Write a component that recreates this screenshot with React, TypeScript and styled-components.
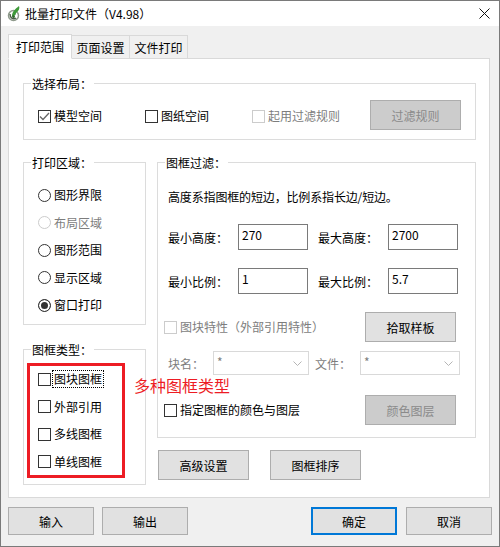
import React from "react";
import styled, { createGlobalStyle } from "styled-components";

const GlobalStyle = createGlobalStyle`
  html, body {
    margin: 0;
    padding: 0;
    background: #fff;
  }
  body {
    font-family: "Noto Sans CJK SC", "Liberation Sans", sans-serif;
    font-size: 12px;
    color: #000;
  }
  * {
    box-sizing: border-box;
  }
`;

const Logo = () => (
  <svg width="14" height="17" viewBox="0 0 14 17">
    <circle cx="6.5" cy="10.5" r="5" fill="#fff" stroke="#8f9a8c" strokeWidth="1.5" />
    <path d="M5 11C5 7 8 4 12 1c1 2 0 5-3 7 0 2-1 3-4 3z" fill="#3f9a3a" />
    <path d="M3 9c0 4 3 6 6 4" fill="none" stroke="#4a5c46" strokeWidth="1.4" />
    <circle cx="6.5" cy="11.5" r="1.5" fill="#2f6b2c" />
  </svg>
);

const Tick = () => (
  <svg width="11" height="11" viewBox="0 0 11 11">
    <path d="M1 5.5L4 8.5 10 2" fill="none" stroke="#666" strokeWidth="1.3" />
  </svg>
);

const Chevron = () => (
  <svg width="9" height="6" viewBox="0 0 9 6">
    <path d="M.5.5l4 4 4-4" fill="none" stroke="#b5b5b5" strokeWidth="1" />
  </svg>
);

const Check = ({ label, checked, disabled, focused }: { label: string; checked?: boolean; disabled?: boolean; focused?: boolean }) => (
  <CheckItem $disabled={disabled}>
    <CheckBox $disabled={disabled}>{checked && <Tick />}</CheckBox>
    <ItemText $focused={focused}>{label}</ItemText>
  </CheckItem>
);

const Radio = ({ label, checked, disabled }: { label: string; checked?: boolean; disabled?: boolean }) => (
  <CheckItem $disabled={disabled}>
    <RadioDot $checked={checked} $disabled={disabled} />
    <ItemText>{label}</ItemText>
  </CheckItem>
);

const Field = ({ label, value }: { label: string; value: string }) => (
  <>
    <FieldLabel>{label}</FieldLabel>
    <TextBox>{value}</TextBox>
  </>
);

export default function App() {
  return (
    <Window>
      <GlobalStyle />
      <TitleBar>
        <TitleIcon>
          <Logo />
        </TitleIcon>
        <TitleText>批量打印文件（V4.98）</TitleText>
        <CloseIcon>
          <svg width="11" height="11" viewBox="0 0 11 11">
            <path d="M.5.5l10 10M10.5.5l-10 10" stroke="#111" strokeWidth="1" />
          </svg>
        </CloseIcon>
      </TitleBar>
      <Body>
        <Tabs>
          <Tab $active>打印范围</Tab>
          <Tab>页面设置</Tab>
          <Tab>文件打印</Tab>
        </Tabs>
        <Panel>
          <LayoutGroup>
            <Legend>选择布局：</Legend>
            <LayoutItem>
              <Check label="模型空间" checked />
            </LayoutItem>
            <LayoutItem>
              <Check label="图纸空间" />
            </LayoutItem>
            <LayoutItem>
              <Check label="起用过滤规则" disabled />
            </LayoutItem>
            <Button $disabled $push>过滤规则</Button>
          </LayoutGroup>
          <Columns>
            <LeftColumn>
              <ListGroup $height={163} $top={25}>
                <Legend>打印区域：</Legend>
                <Radio label="图形界限" />
                <Radio label="布局区域" disabled />
                <Radio label="图形范围" />
                <Radio label="显示区域" />
                <Radio label="窗口打印" checked />
              </ListGroup>
              <ListGroup $height={136} $top={22}>
                <Legend>图框类型：</Legend>
                <Check label="图块图框" focused />
                <Check label="外部引用" />
                <Check label="多线图框" />
                <Check label="单线图框" />
                <RedMark />
                <RedNote>多种图框类型</RedNote>
              </ListGroup>
            </LeftColumn>
            <RightColumn>
              <FilterGroup>
                <Legend>图框过滤：</Legend>
                <Hint>高度系指图框的短边，比例系指长边/短边。</Hint>
                <FormRow $top={19}>
                  <Field label="最小高度：" value="270" />
                  <Field label="最大高度：" value="2700" />
                </FormRow>
                <FormRow $top={18}>
                  <Field label="最小比例：" value="1" />
                  <Field label="最大比例：" value="5.7" />
                </FormRow>
                <CheckRow $top={18}>
                  <Check label="图块特性（外部引用特性）" disabled />
                  <Button $push>拾取样板</Button>
                </CheckRow>
                <FormRow $top={9}>
                  <NameLabel>块名：</NameLabel>
                  <Select $width={96}>
                    *
                    <Chevron />
                  </Select>
                  <FileLabel>文件：</FileLabel>
                  <Select $width={100}>
                    *
                    <Chevron />
                  </Select>
                </FormRow>
                <CheckRow $top={20}>
                  <Check label="指定图框的颜色与图层" />
                  <Button $disabled $push>颜色图层</Button>
                </CheckRow>
              </FilterGroup>
              <ActionRow>
                <Button>高级设置</Button>
                <Button>图框排序</Button>
              </ActionRow>
            </RightColumn>
          </Columns>
        </Panel>
        <Footer>
          <FooterGroup $gap={8}>
            <FooterButton>输入</FooterButton>
            <FooterButton>输出</FooterButton>
          </FooterGroup>
          <FooterGroup $gap={9}>
            <FooterButton $primary>确定</FooterButton>
            <FooterButton>取消</FooterButton>
          </FooterGroup>
        </Footer>
      </Body>
    </Window>
  );
}

const Window = styled.div`
  width: 500px;
  height: 547px;
  border: 1px solid #7a7a7a;
  display: flex;
  flex-direction: column;
  background: #f0f0f0;
  overflow: hidden;
`;

const TitleBar = styled.div`
  height: 25px;
  flex: none;
  background: #fff;
  display: flex;
  align-items: center;
  padding: 0 9px 0 6px;
`;

const TitleIcon = styled.div`
  width: 14px;
  height: 17px;
  margin-right: 4px;
  display: flex;
`;

const TitleText = styled.div`
  letter-spacing: 0;
`;

const CloseIcon = styled.div`
  margin-left: auto;
  display: flex;
`;

const Body = styled.div`
  flex: 1;
  padding: 8px 7px 0;
  display: flex;
  flex-direction: column;
`;

const Tabs = styled.div`
  display: flex;
  height: 25px;
  align-items: flex-end;
  position: relative;
  z-index: 1;
  margin-bottom: -1px;
`;

const Tab = styled.div<{ $active?: boolean }>`
  height: ${(p) => (p.$active ? "25px" : "23px")};
  width: ${(p) => (p.$active ? "64px" : "59px")};
  margin-left: ${(p) => (p.$active ? "0" : "-1px")};
  margin-bottom: ${(p) => (p.$active ? "0" : "1px")};
  border: 1px solid #d9d9d9;
  border-bottom: ${(p) => (p.$active ? "1px solid #fff" : "none")};
  background: ${(p) => (p.$active ? "#fff" : "#f0f0f0")};
  display: flex;
  align-items: center;
  justify-content: center;
  white-space: nowrap;
`;

const Panel = styled.div`
  width: 482px;
  height: 440px;
  flex: none;
  background: #fff;
  border: 1px solid #d9d9d9;
  padding: 24px 0 0 14px;
`;

const Legend = styled.div`
  position: absolute;
  left: 7px;
  top: -9px;
  padding: 0 2px 0 1px;
  background: #fff;
  line-height: 17px;
  white-space: nowrap;
`;

const LayoutGroup = styled.div`
  position: relative;
  width: 453px;
  height: 57px;
  border: 1px solid #dcdcdc;
  padding: 16px 14px 0 14px;
  display: flex;
  align-items: flex-start;
`;

const LayoutItem = styled.div`
  width: 107px;
  flex: none;
  padding-top: 9px;
`;

const Columns = styled.div`
  display: flex;
  gap: 11px;
  margin-top: 22px;
`;

const LeftColumn = styled.div`
  width: 123px;
  display: flex;
  flex-direction: column;
  gap: 24px;
`;

const RightColumn = styled.div`
  width: 319px;
  display: flex;
  flex-direction: column;
  gap: 12px;
`;

const ListGroup = styled.div<{ $height: number; $top: number }>`
  position: relative;
  height: ${(p) => p.$height}px;
  border: 1px solid #dcdcdc;
  padding: ${(p) => p.$top}px 0 0 14px;
  display: flex;
  flex-direction: column;
  gap: 13.6px;
`;

const FilterGroup = styled.div`
  position: relative;
  height: 276px;
  border: 1px solid #dcdcdc;
  padding: 26px 17px 0 10px;
`;

const Hint = styled.div`
  line-height: 16px;
  height: 16px;
  white-space: nowrap;
  letter-spacing: -0.15px;
`;

const FormRow = styled.div<{ $top: number }>`
  display: flex;
  align-items: center;
  margin-top: ${(p) => p.$top}px;
`;

const CheckRow = styled.div<{ $top: number }>`
  display: flex;
  align-items: center;
  margin: ${(p) => p.$top}px 2px 0 -4px;
`;

const FieldLabel = styled.div`
  width: 70px;
  flex: none;
  white-space: nowrap;
  & ~ & {
    margin-left: 10px;
  }
`;

const TextBox = styled.div`
  width: 70px;
  height: 26px;
  flex: none;
  border: 1px solid #7a7a7a;
  padding: 1px 3px;
  line-height: 18px;
  background: #fff;
`;

const NameLabel = styled.div`
  width: 45px;
  flex: none;
  color: #7d7d7d;
`;

const FileLabel = styled.div`
  width: 45px;
  margin-left: 6px;
  flex: none;
  color: #7d7d7d;
`;

const Select = styled.div<{ $width: number }>`
  width: ${(p) => p.$width}px;
  height: 24px;
  flex: none;
  border: 1px solid #d9d9d9;
  padding: 2px 3px 0;
  color: #7d7d7d;
  line-height: 16px;
  display: flex;
  justify-content: space-between;
  svg {
    margin: 7px 3px 0 0;
  }
`;

const ActionRow = styled.div`
  display: flex;
  gap: 21px;
  padding-left: 1px;
`;

const Button = styled.div<{ $disabled?: boolean; $push?: boolean }>`
  width: 91px;
  height: 30px;
  flex: none;
  margin-left: ${(p) => (p.$push ? "auto" : "0")};
  border: 1px solid #adadad;
  background: ${(p) => (p.$disabled ? "#cccccc" : "#e1e1e1")};
  color: ${(p) => (p.$disabled ? "#8a8a8a" : "#000")};
  display: flex;
  align-items: center;
  justify-content: center;
`;

const CheckItem = styled.div<{ $disabled?: boolean }>`
  display: flex;
  align-items: center;
  height: 14px;
  color: ${(p) => (p.$disabled ? "#7d7d7d" : "#000")};
  white-space: nowrap;
`;

const CheckBox = styled.div<{ $disabled?: boolean }>`
  width: 13px;
  height: 13px;
  flex: none;
  border: 1px solid ${(p) => (p.$disabled ? "#cccccc" : "#333")};
  background: #fff;
  display: flex;
  align-items: center;
  justify-content: center;
`;

const RadioDot = styled.div<{ $checked?: boolean; $disabled?: boolean }>`
  width: 13px;
  height: 13px;
  flex: none;
  border-radius: 50%;
  border: 1px solid ${(p) => (p.$disabled ? "#cccccc" : "#333")};
  background: ${(p) => (p.$checked ? "#333" : "#fff")};
  box-shadow: ${(p) => (p.$checked ? "inset 0 0 0 2px #fff" : "none")};
`;

const ItemText = styled.span<{ $focused?: boolean }>`
  margin-left: 3px;
  line-height: 14px;
  outline: ${(p) => (p.$focused ? "1px dotted #000" : "none")};
  outline-offset: 1px;
`;

const RedMark = styled.div`
  position: absolute;
  left: 3px;
  top: 13px;
  width: 98px;
  height: 115px;
  border: 3px solid #ed1c24;
  pointer-events: none;
`;

const RedNote = styled.div`
  position: absolute;
  left: 110px;
  top: 24px;
  font-size: 16px;
  line-height: 22px;
  color: #ed1c24;
  white-space: nowrap;
`;

const Footer = styled.div`
  display: flex;
  justify-content: space-between;
  margin-top: 9px;
`;

const FooterGroup = styled.div<{ $gap: number }>`
  display: flex;
  gap: ${(p) => p.$gap}px;
`;

const FooterButton = styled.div<{ $primary?: boolean }>`
  width: 86px;
  height: 28px;
  border: ${(p) => (p.$primary ? "2px solid #0078d7" : "1px solid #adadad")};
  background: #e1e1e1;
  display: flex;
  align-items: center;
  justify-content: center;
`;
